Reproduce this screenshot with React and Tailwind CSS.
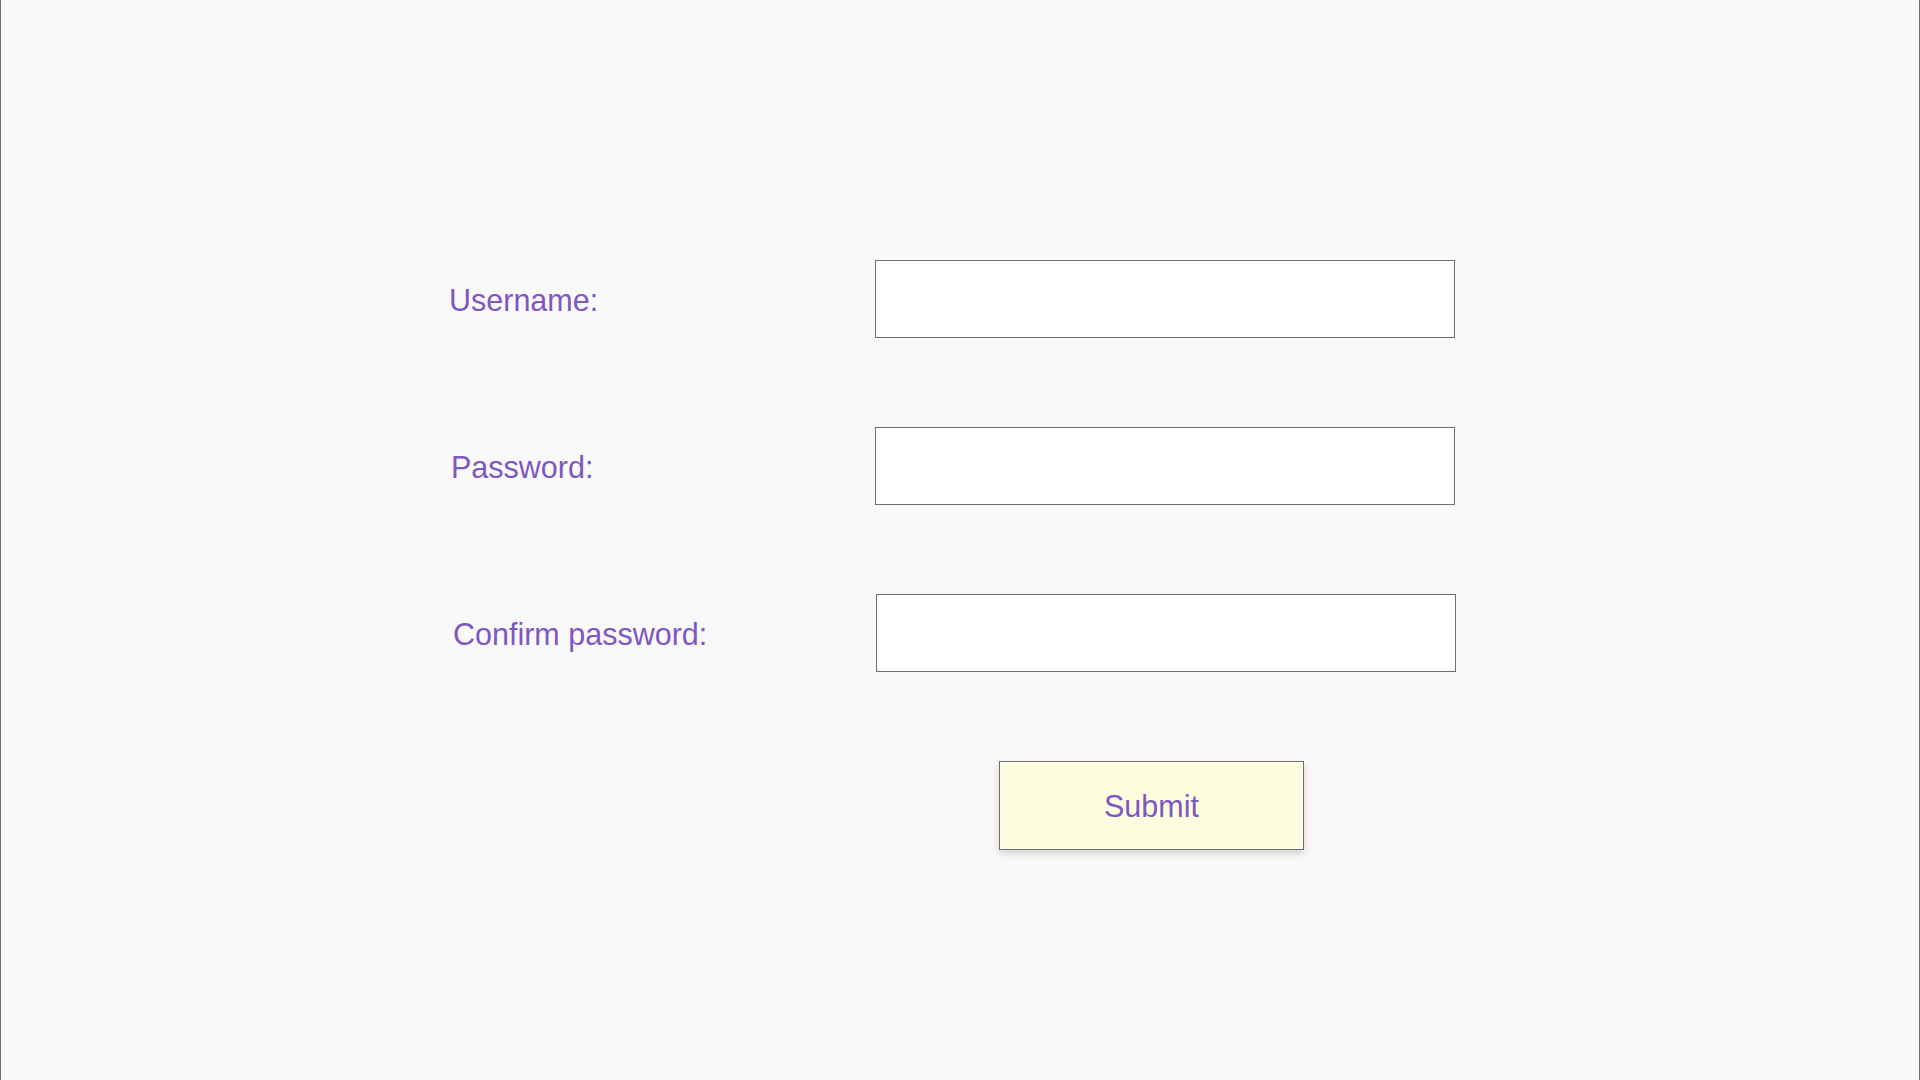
import React from "react";

const labelCls = "text-[30.5px] text-[#7e57c2] leading-none pt-[2px]";
const inputCls = "h-[78px] w-[580px] border border-[#6f6f6f] bg-white outline-none px-3 text-[24px]";

const Row = ({ label, offset, type }) => (
  <div className="flex items-center h-[78px]">
    <label className={`${labelCls} ${offset}`}>{label}</label>
    <input type={type} className={inputCls} />
  </div>
);

export default function App() {
  return (
    <div
      className="w-full h-[1080px] bg-[#f9f9f9] border-x border-[#6f6f6f] pt-[260px]"
      style={{ fontFamily: '"Liberation Sans", Arial, sans-serif' }}
    >
      <form className="flex flex-col gap-[89px]" onSubmit={(e) => e.preventDefault()}>
        <Row label="Username:" type="text" offset="w-[874px] pl-[448px]" />
        <Row label="Password:" type="password" offset="w-[874px] pl-[450px]" />
        <Row label="Confirm password:" type="password" offset="w-[875px] pl-[452px]" />
        <div className="pl-[998px]">
          <button
            type="submit"
            className="w-[305px] h-[89px] bg-[#fefde0] border border-[#6f6f6f] text-[30.5px] text-[#7e57c2] pt-[3px] shadow-[0_4px_8px_rgba(0,0,0,0.15)]"
          >
            Submit
          </button>
        </div>
      </form>
    </div>
  );
}
